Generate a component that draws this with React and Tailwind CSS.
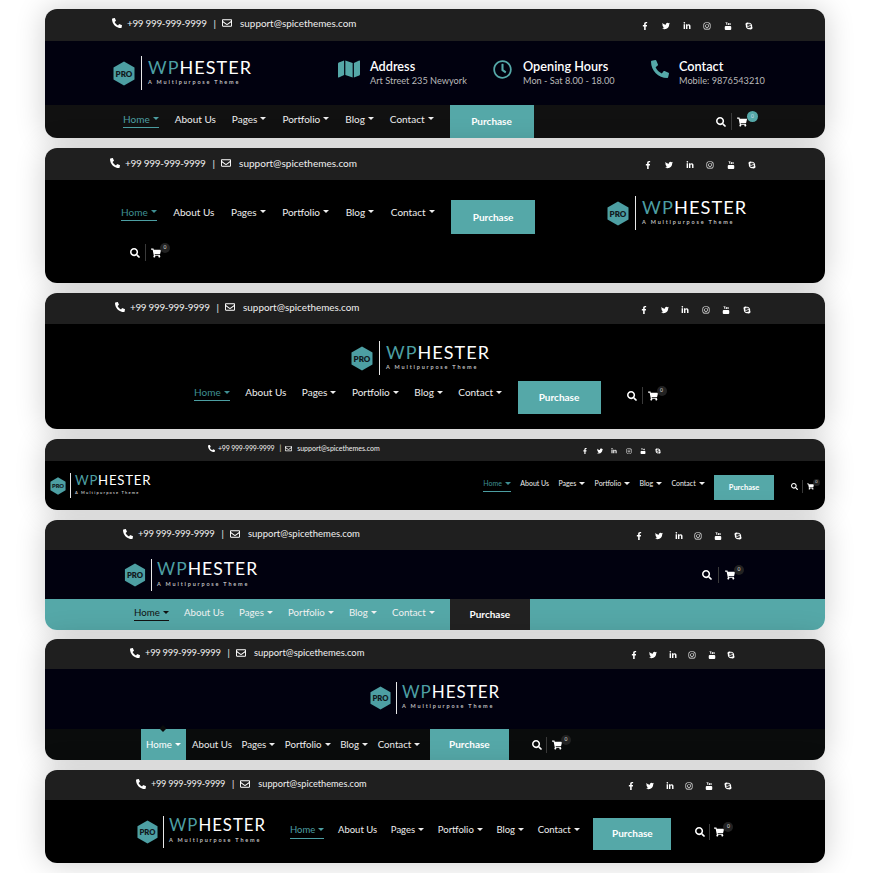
import React from "react";
import { FaPhoneAlt, FaPhone, FaRegEnvelope, FaFacebookF, FaTwitter, FaLinkedinIn, FaInstagram, FaSkype, FaMap, FaRegClock, FaSearch, FaShoppingCart } from "react-icons/fa";

const Yt = ({ className }) => (
  <svg viewBox="0 0 16 16" className={className} fill="currentColor">
    <rect x="1.5" y="8" width="13" height="8" rx="2" />
    <path d="M3 0h1.2l.8 2.2L5.8 0H7L5.6 3.6V6H4.5V3.6zM8.6 1.8c.8 0 1.3.5 1.3 1.3v1.7c0 .8-.5 1.3-1.3 1.3s-1.3-.5-1.3-1.3V3.1c0-.8.5-1.3 1.3-1.3zM10.7 1.9h1v3.3c0 .3.4.3.7 0V1.9h1V6h-1v-.4c-.6.6-1.7.6-1.7-.4z" />
  </svg>
);

function TopBar({ h, pl, pr, text, up = "-translate-y-[1px]", gap = "mr-[5px]", mailGap = "mr-[8px]", icon = "size-[10px]", sep = "ml-[7px] mr-[6px]", social, socialIcon = "size-[8px]", track = "tracking-[-0.03em]" }) {
  return (
    <div className={`${h} ${pl} ${pr} ${text} flex items-center justify-between bg-[#1f1f1f] text-[#f0f0f0]`}>
      <div className={`flex items-center ${up}`}>
        <FaPhoneAlt className={`${icon} ${gap} text-white`} />
        <span className={track}>+99 999-999-9999</span>
        <span className={sep}>|</span>
        <FaRegEnvelope className={`${icon} ${mailGap} text-white`} />
        <span>support@spicethemes.com</span>
      </div>
      <div className={`flex translate-y-[1px] items-center ${social} text-white`}>
        <FaFacebookF className={socialIcon} />
        <FaTwitter className={socialIcon} />
        <FaLinkedinIn className={socialIcon} />
        <FaInstagram className={socialIcon} />
        <Yt className={socialIcon} />
        <FaSkype className={socialIcon} />
      </div>
    </div>
  );
}

function Logo({ hex = "h-[25px] w-[22px]", gap = "gap-[6px]", line = "h-[34px]", title, sub = "text-[5.5px] tracking-[0.33em]", subMt = "mt-[4px]", cls = "" }) {
  return (
    <div className={`flex shrink-0 items-center ${gap} ${cls}`}>
      <svg viewBox="0 0 22 25" className={hex}>
        <path d="M11 0.5 21.5 6.5V18.5L11 24.5 0.5 18.5V6.5Z" fill="#4d9fa3" />
        <text x="11" y="15.5" textAnchor="middle" fontSize="8" fontWeight="800" fill="#10181c" fontFamily="Lato, sans-serif">PRO</text>
      </svg>
      <div className={`${line} w-px bg-[#e8e8e8]`} />
      <div className="flex -translate-y-[1px] flex-col">
        <div className={`${title} whitespace-nowrap font-normal leading-none tracking-[0.058em] text-white`}>
          <span className="text-[#4d9fa3]">WP</span>HESTER
        </div>
        <div className={`${sub} ${subMt} whitespace-nowrap font-bold leading-none text-[#bdbdbd]`}>A Multipurpose Theme</div>
      </div>
    </div>
  );
}

function Caret() {
  return <span className="ml-[3px] inline-block h-0 w-0 border-x-[3px] border-t-[3px] border-x-transparent border-t-current" />;
}

function Nav({ gap, text, cls = "", home = "border-[#4d9fa3] text-[#4d9fa3]", color = "text-[#eeeeee]", pb = "pb-[2px]" }) {
  const items = ["About Us", "Pages", "Portfolio", "Blog", "Contact"];
  return (
    <div className={`flex items-center leading-[12px] whitespace-nowrap ${gap} ${text} ${color} ${cls}`}>
      <span className={`flex items-center border-b ${pb} ${home}`}>
        Home<Caret />
      </span>
      {items.map((t) => (
        <span key={t} className={`flex items-center border-b border-transparent ${pb}`}>
          {t}
          {t !== "About Us" && <Caret />}
        </span>
      ))}
    </div>
  );
}

function Purchase({ cls }) {
  return <div className={`flex shrink-0 items-center justify-center font-bold text-white ${cls}`}>Purchase</div>;
}

function Cart({ cls = "", icon = "size-[10px]", div = "h-[17px] mx-[5px]", badge = "bg-[#222] size-[10px] text-[5px] text-[#ddd] -top-[5px] left-[9px]" }) {
  return (
    <div className={`flex items-center text-white ${cls}`}>
      <FaSearch className={icon} />
      <span className={`w-px bg-[#3a3a3a] ${div}`} />
      <span className="relative">
        <FaShoppingCart className={icon} />
        <span className={`absolute flex items-center justify-center rounded-full leading-none ${badge}`}>0</span>
      </span>
    </div>
  );
}

function Info({ icon, title, sub, w, col }) {
  return (
    <div className={`flex shrink-0 items-center ${w}`}>
      <div className={`mb-[8px] flex shrink-0 text-[#55a8a8] ${col}`}>{icon}</div>
      <div className="whitespace-nowrap">
        <div className="text-[12.7px] font-semibold leading-[16px] text-white">{title}</div>
        <div className="text-[9.2px] leading-[14px] text-[#b9b9b9]">{sub}</div>
      </div>
    </div>
  );
}

const card = "w-[780px] overflow-hidden rounded-[12px] shadow-[0_0_30px_rgba(0,0,0,0.2)]";
const teal = "bg-[#55a8a8]";

export default function App() {
  return (
    <div className="min-h-[873px] overflow-hidden bg-white pl-[45px] pt-[9px] font-[Lato,sans-serif]">
      <div className="flex flex-col gap-[10px]">
        {/* 1 */}
        <div className={card}>
          <TopBar h="h-[32px]" text="text-[9.9px]" pl="pl-[67px]" pr="pr-[72px]" social="gap-[12.8px]" up="-translate-y-[2px]" />
          <div className="flex h-[64px] items-center bg-[#01010f] pl-[68px]">
            <Logo title="text-[18px]" />
            <div className="ml-[86px] flex">
              <Info w="w-[155px]" col="w-[32px]" icon={<FaMap className="size-[22px]" />} title="Address" sub="Art Street 235 Newyork" />
              <Info w="w-[158px]" col="w-[30px]" icon={<FaRegClock className="size-[19px]" />} title="Opening Hours" sub="Mon - Sat 8.00 - 18.00" />
              <Info w="w-[125px]" col="w-[28px]" icon={<FaPhone className="size-[18px] -scale-x-100" />} title="Contact" sub="Mobile: 9876543210" />
            </div>
          </div>
          <div className="flex h-[33px] items-center bg-[#111111] pl-[78px] pr-[78px]">
            <Nav gap="gap-[16px]" text="text-[10px]" cls="mb-[3px]" />
            <Purchase cls={`ml-[16px] h-full w-[84px] text-[10px] ${teal}`} />
            <Cart cls="ml-auto" badge="bg-[#55a8a8] size-[11px] text-[5px] text-[#cde] -top-[6px] left-[10px]" />
          </div>
        </div>
        {/* 2 */}
        <div className={card}>
          <TopBar h="h-[32px]" text="text-[10px]" pl="pl-[65px]" pr="pr-[69px]" social="gap-[12.8px]" />
          <div className="flex h-[103px] flex-col bg-black">
            <div className="flex items-center pl-[76px] pt-[16px]">
              <Nav gap="gap-[16.6px]" text="text-[10px]" cls="mb-[8px]" home="border-[#4d9fa3] text-[#3f8f93]" />
              <Purchase cls={`ml-[16.6px] h-[34px] w-[84px] text-[10px] ${teal}`} />
              <Logo cls="mb-[8px] ml-[72px]" title="text-[18.2px]" />
            </div>
            <Cart cls="pl-[85px] pt-[6px]" />
          </div>
        </div>
        {/* 3 */}
        <div className={card}>
          <TopBar h="h-[31px]" text="text-[9.9px]" pl="pl-[70px]" pr="pr-[74px]" social="gap-[12.6px]" />
          <div className="flex h-[105px] flex-col bg-black">
            <Logo cls="ml-[306px] mt-[17px]" title="text-[18px]" />
            <div className="flex items-center pl-[149px] pt-[6px]">
              <Nav gap="gap-[15.5px]" text="text-[10px]" cls="mb-[8px]" home="border-[#4d9fa3] text-[#3f8f93]" />
              <Purchase cls={`ml-[15.5px] h-[33px] w-[83px] text-[10px] ${teal}`} />
              <Cart cls="mb-[4px] ml-[26px]" />
            </div>
          </div>
        </div>
        {/* 4 */}
        <div className={card}>
          <TopBar h="h-[22px]" text="text-[7px]" pl="pl-[163px]" pr="pr-[164px]" up="-translate-y-[2px]" gap="mr-[3px]" mailGap="mr-[5px]" icon="size-[7px]" sep="ml-[5px] mr-[4px]" social="gap-[8.6px]" socialIcon="size-[6px]" />
          <div className="flex h-[49px] items-center bg-black pl-[5px] pr-[11px]">
            <Logo hex="h-[18px] w-[16px]" gap="gap-[4px]" line="h-[25px]" title="text-[13.2px]" sub="text-[4px] tracking-[0.3em]" subMt="mt-[3px]" />
            <div className="ml-auto mt-[4px] flex items-center">
              <Nav gap="gap-[9.3px]" text="text-[7px]" cls="mb-[6px]" home="border-[#4d9fa3] text-[#3f8f93]" />
              <Purchase cls={`ml-[9.3px] h-[25px] w-[60px] text-[7.5px] ${teal}`} />
              <Cart cls="mb-[3px] ml-[17px]" icon="size-[7px]" div="h-[13px] mx-[4px]" badge="bg-[#222] size-[7px] text-[4px] text-[#ddd] -top-[4px] left-[6px]" />
            </div>
          </div>
        </div>
        {/* 5 */}
        <div className={`${card} -mb-px`}>
          <TopBar h="h-[30px]" text="text-[9.5px]" pl="pl-[78px]" pr="pr-[83px]" social="gap-[11.8px]" />
          <div className="flex h-[49px] items-center bg-[#01010f] pl-[79px] pr-[90px]">
            <Logo gap="gap-[5px]" hex="h-[24px] w-[22px]" line="h-[32px]" title="text-[17.5px]" />
            <Cart cls="ml-auto" div="h-[16px] mx-[6px]" />
          </div>
          <div className="flex h-[31px] items-center bg-[#55a8a8] pl-[89px]">
            <Nav gap="gap-[15.2px]" text="text-[9.7px]" cls="mb-[2px]" color="text-[#f2f2f2]" home="border-[#111] text-[#111]" />
            <Purchase cls="ml-[15.2px] h-full w-[80px] bg-[#222222] text-[10px]" />
          </div>
        </div>
        {/* 6 */}
        <div className={card}>
          <TopBar h="h-[30px]" text="text-[9.4px]" pl="pl-[85px]" pr="pr-[90px]" social="gap-[11.5px]" />
          <div className="flex h-[60px] items-center bg-[#01010f] pb-[3px] pl-[325px]">
            <Logo gap="gap-[5px]" hex="h-[24px] w-[21px]" line="h-[32px]" title="text-[17px]" />
          </div>
          <div className="flex h-[31px] items-center bg-[#0a0c0c] pl-[96px]">
            <div className={`relative flex h-full w-[45px] items-center justify-center text-[9.7px] text-white ${teal}`}>
              <span className="absolute -top-[3px] left-[22px] size-[5px] -translate-x-1/2 rotate-45 bg-[#0a0c0c]" />
              Home<Caret />
            </div>
            <div className="ml-[6px] flex items-center gap-[9.6px] whitespace-nowrap text-[9.7px] text-[#eeeeee]">
              <span>About Us</span>
              <span className="flex items-center">Pages<Caret /></span>
              <span className="flex items-center">Portfolio<Caret /></span>
              <span className="flex items-center">Blog<Caret /></span>
              <span className="flex items-center">Contact<Caret /></span>
            </div>
            <Purchase cls={`ml-[9.6px] h-full w-[79px] text-[10px] ${teal}`} />
            <Cart cls="ml-[23px]" div="h-[16px] mx-[4.5px]" />
          </div>
        </div>
        {/* 7 */}
        <div className={card}>
          <TopBar h="h-[30px]" text="text-[9.2px]" pl="pl-[91px]" pr="pr-[93px]" social="gap-[11.4px]" />
          <div className="flex h-[63px] items-center bg-black pl-[92px]">
            <Logo gap="gap-[5px]" hex="h-[24px] w-[21px]" line="h-[32px]" title="text-[16.8px]" />
            <div className="ml-[24px] mt-[4px] flex items-center">
              <Nav gap="gap-[13.7px]" text="text-[9.5px]" cls="mb-[5px]" />
              <Purchase cls={`ml-[13.7px] h-[32px] w-[78px] text-[10px] ${teal}`} />
              <Cart cls="mb-[4px] ml-[24px]" div="h-[16px] mx-[4px]" />
            </div>
          </div>
        </div>
      </div>
    </div>
  );
}
